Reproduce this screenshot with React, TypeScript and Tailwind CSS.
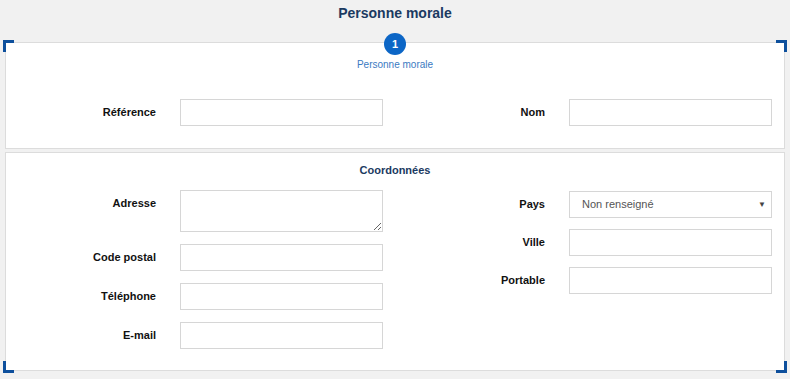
import React from "react";

const font = { fontFamily: '"Liberation Sans", Arial, sans-serif' };

function Label({ children }: { children: React.ReactNode }) {
  return (
    <div className="w-[150px] shrink-0 pt-[6px] text-right text-[11px] font-bold leading-[15px] text-[#111]">
      {children}
    </div>
  );
}

function Field({ label, children }: { label: string; children: React.ReactNode }) {
  return (
    <div className="flex">
      <Label>{label}</Label>
      <div className="ml-[24px] w-[203px]">{children}</div>
    </div>
  );
}

function Input() {
  return <input className="block h-[27px] w-[203px] border border-[#d6d6d6] bg-white outline-none" />;
}

function Corner({ pos }: { pos: string }) {
  return <div className={pos} />;
}

export default function App() {
  return (
    <div className="min-h-[379px] w-[790px] bg-[#f1f1f1]" style={font}>
      <div className="flex h-[42px] items-start justify-center pt-[5px]">
        <h1 className="text-[14px] font-bold leading-[17px] text-[#1b3a61]">Personne morale</h1>
      </div>
      <div className="relative mx-[5px]">
        <Corner pos="absolute left-[-2px] top-[-2px] h-[12px] w-[11px] border-l-[3px] border-t-[3px] border-[#0d4f9c]" />
        <Corner pos="absolute right-[-2px] top-[-2px] h-[12px] w-[11px] border-r-[3px] border-t-[3px] border-[#0d4f9c]" />
        <Corner pos="absolute left-[-2px] bottom-[-2px] h-[12px] w-[11px] border-l-[3px] border-b-[3px] border-[#0d4f9c]" />
        <Corner pos="absolute right-[-2px] bottom-[-2px] h-[12px] w-[11px] border-r-[3px] border-b-[3px] border-[#0d4f9c]" />

        <section className="border border-[#dcdcdc] bg-white pb-[22px]">
          <div className="flex flex-col items-center">
            <div className="-mt-[10px] flex h-[22px] w-[22px] items-center justify-center rounded-full bg-[#0c66c6] text-[11px] font-bold text-white">
              1
            </div>
            <div className="mt-[3px] text-[10px] leading-[14px] text-[#3a7ac2]">Personne morale</div>
          </div>
          <div className="mt-[27px] grid grid-cols-2">
            <Field label="Référence">
              <Input />
            </Field>
            <Field label="Nom">
              <Input />
            </Field>
          </div>
        </section>

        <div className="h-[3px]" />

        <section className="border border-[#dcdcdc] bg-white pb-[21px] pt-[10px]">
          <div className="text-center text-[11px] font-bold leading-[15px] text-[#1b3a61]">Coordonnées</div>
          <div className="mt-[12px] grid grid-cols-2">
            <div className="flex flex-col gap-[12px]">
              <Field label="Adresse">
                <textarea className="block h-[42px] w-[203px] resize border border-[#d6d6d6] bg-white outline-none" />
              </Field>
              <Field label="Code postal">
                <Input />
              </Field>
              <Field label="Téléphone">
                <Input />
              </Field>
              <Field label="E-mail">
                <Input />
              </Field>
            </div>
            <div className="flex flex-col gap-[11px] pt-[1px]">
              <Field label="Pays">
                <div className="flex h-[27px] w-[203px] items-center justify-between border border-[#d6d6d6] bg-white pl-[12px] pr-[5px]">
                  <span className="text-[11px] text-[#555]">Non renseigné</span>
                  <span className="text-[8px] text-[#444]">▼</span>
                </div>
              </Field>
              <Field label="Ville">
                <Input />
              </Field>
              <Field label="Portable">
                <Input />
              </Field>
            </div>
          </div>
        </section>
      </div>
    </div>
  );
}
